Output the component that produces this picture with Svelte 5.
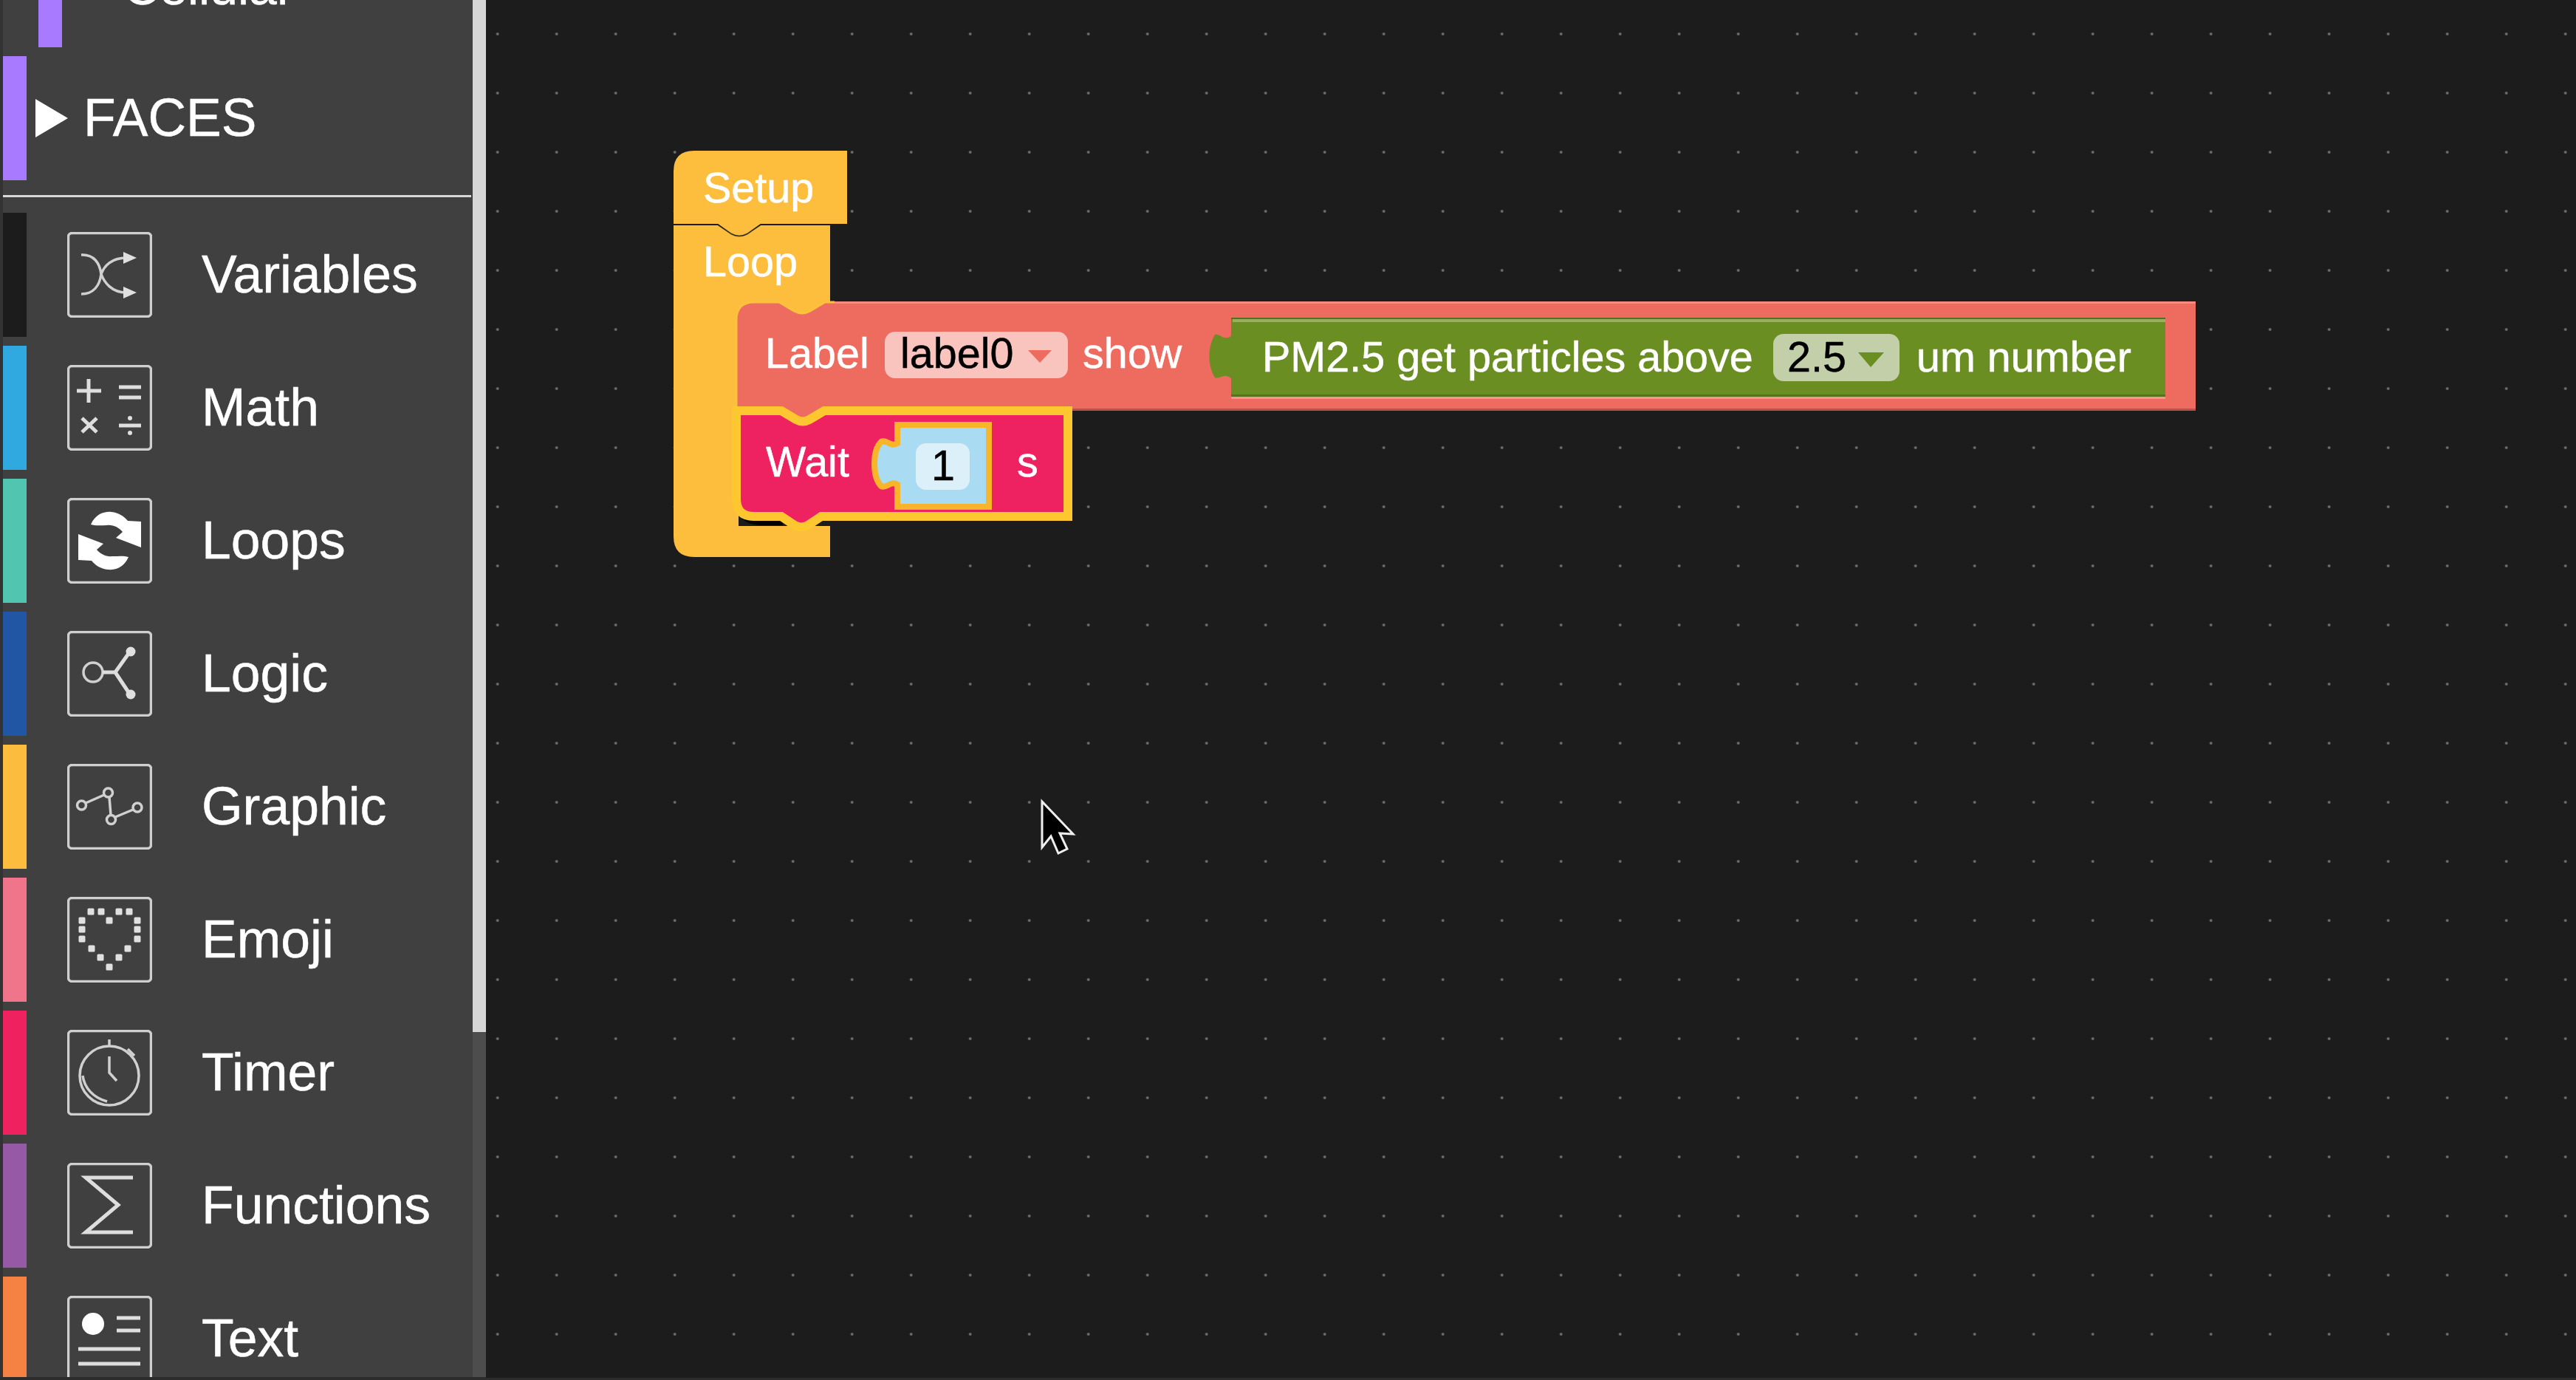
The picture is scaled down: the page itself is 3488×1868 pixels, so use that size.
<script>
  const rows = [
    { name: "Variables", color: "#1c1c1c", icon: "variables" },
    { name: "Math", color: "#2fa9e0", icon: "math" },
    { name: "Loops", color: "#52c5b0", icon: "loops" },
    { name: "Logic", color: "#2156a5", icon: "logic" },
    { name: "Graphic", color: "#fcbc3e", icon: "graphic" },
    { name: "Emoji", color: "#f0758a", icon: "emoji" },
    { name: "Timer", color: "#f0215f", icon: "timer" },
    { name: "Functions", color: "#9659a5", icon: "functions" },
    { name: "Text", color: "#f58243", icon: "text" }
  ];

  const heartDots = [
    [32, 20], [46, 20], [70, 20], [84, 20],
    [20, 32], [57, 32], [95, 32],
    [20, 44], [95, 44], [20, 57], [95, 57],
    [33, 70], [82, 70], [45, 82], [70, 82], [57, 95]
  ];
</script>

<div class="page">
  <aside class="sidebar">
    <div class="list">
      <div class="row sub">
        <span class="bar purple"></span>
        <span class="label sublabel">Cellular</span>
      </div>
      <div class="row category">
        <span class="bar purple"></span>
        <svg class="caret" viewBox="0 0 44 52"><path d="M0 0 L44 26 L0 52Z" fill="#fff" /></svg>
        <span class="label">FACES</span>
      </div>
      <div class="sep"></div>
      {#each rows as row}
        <div class="row">
          <span class="bar" style="background: {row.color}"></span>
          <svg class="icon" viewBox="0 0 115 116">
            <rect class="frame" x="1.5" y="1.5" width="112" height="113" rx="5" />
            {#if row.icon === "variables"}
              <path class="line" d="M19 31 C36 30 44 42 46 57 C44 72 36 84 19 84" />
              <path class="line" d="M80 35 C60 35 50 46 46 57 C50 68 60 82 80 82" />
              <path class="solid" d="M76 27 L94 35 L76 43Z M76 74 L94 82 L76 90Z" />
            {:else if row.icon === "math"}
              <path class="bold" d="M29 19 V51 M13 35 H46 M70 30 H100 M70 44 H100 M20 72 L40 91 M40 72 L20 91 M70 82 H100" />
              <circle class="solid" cx="85" cy="72" r="3" />
              <circle class="solid" cx="85" cy="92" r="3" />
            {:else if row.icon === "loops"}
              <g>
                <path class="white" d="M32 36 C38 22 50 18 60 19 C70 20 77 25 82 31 L100 32 L100 67 L66 54 L75 46 C70 40 62 36 54 37 C46 37 38 38 32 36Z" />
                <path class="white" transform="rotate(180 57.5 58)" d="M32 36 C38 22 50 18 60 19 C70 20 77 25 82 31 L100 32 L100 67 L66 54 L75 46 C70 40 62 36 54 37 C46 37 38 38 32 36Z" />
              </g>
            {:else if row.icon === "logic"}
              <circle class="line" cx="35" cy="56" r="13" />
              <path class="bold" d="M48 56 H65 L85 28 M65 56 L85 86" />
              <circle class="solid" cx="86" cy="28" r="6.5" />
              <circle class="solid" cx="86" cy="86" r="6.5" />
            {:else if row.icon === "graphic"}
              <path class="line" d="M25 53 L50 42 M57 45 L59 69 M65 72 L89 62" />
              <circle class="line" cx="19.5" cy="56" r="6" />
              <circle class="line" cx="55.5" cy="39" r="6" />
              <circle class="line" cx="59.5" cy="75.5" r="6" />
              <circle class="line" cx="95" cy="59" r="6" />
            {:else if row.icon === "emoji"}
              {#each heartDots as d}
                <rect class="solid" x={d[0] - 4.5} y={d[1] - 4.5} width="9" height="9" rx="1.5" />
              {/each}
            {:else if row.icon === "timer"}
              <circle class="line" cx="57" cy="62" r="40" />
              <path class="line" d="M57 13 V22 M82 26 L91 35 M57 36 V58 L67 69" />
              <path class="line" d="M21 62 C23 78 35 92 54 97" />
            {:else if row.icon === "functions"}
              <path class="bold" d="M89 20 H25 L69 57 L25 94 H89" />
            {:else if row.icon === "text"}
              <circle class="white" cx="35" cy="38" r="15" />
              <path class="bold" d="M67 30 H99 M67 47 H99 M15 72 H99 M15 92 H99" />
            {/if}
          </svg>
          <span class="label">{row.name}</span>
        </div>
      {/each}
    </div>
    <div class="track"><div class="thumb"></div></div>
  </aside>

  <main class="canvas">
    <!-- viewBox uses page coordinates, the blocks sit freely on the workspace -->
    <svg class="blocks" viewBox="658 0 2830 1868">
      <path fill="#fcbe3c" d="M912 305 H972 L990 317 Q1001 323 1012 317 L1030 305 H1124 V440 H1000 V712 H1124 V754 H940 Q912 754 912 726Z" />
      <path fill="#fcbe3c" d="M912 303 V232 Q912 204 940 204 H1147 V303 H1030 L1012 316 Q1001 322 990 316 L972 303Z" />
      <path fill="none" stroke="#1c1c1c" stroke-width="2" opacity="0.5" d="M912 304 H972 L990 316.5 Q1001 322.5 1012 316.5 L1030 304 H1124" />
      <text x="952" y="274" class="t">Setup</text>
      <text x="952" y="374" class="t">Loop</text>
      <path d="M996 688 Q1003 712 1036 711 H1060 V680 H996Z" fill="#000" />

      <path fill="#ee6b5f" d="M997 555 V433 Q997 409 1021 409 H1055 L1075 421 Q1086 427 1097 421 L1117 409 H2973 V555 H1116 L1096 567 Q1087 572 1078 567 L1058 555Z" />
      <path fill="none" stroke="#fdc23c" stroke-width="3" d="M997 555 V433 Q997 409 1021 409 H1055 L1075 421 Q1086 427 1097 421 L1117 409 H1130" />
      <rect x="1130" y="408" width="1843" height="3" fill="#f88a7e" />
      <rect x="1452" y="553" width="1521" height="3" fill="#b4554c" />
      <text x="1036" y="498" class="t">Label</text>
      <rect x="1198" y="449" width="248" height="63" rx="14" fill="#f8c4bd" />
      <text x="1219" y="498" class="t dark">label0</text>
      <path d="M1392 474 H1424 L1408 491Z" fill="#ee6b5f" />
      <text x="1466" y="498" class="t">show</text>

      <path fill="#6b8e23" d="M1667 430 H2932 V537 H1667 V512 C1657 504 1652 514 1645 511 C1635 495 1635 470 1645 453 C1652 451 1657 462 1667 455Z" />
      <rect x="1667" y="430" width="1265" height="2" fill="#54701b" />
      <rect x="1669" y="432" width="1263" height="4" fill="#9bb05f" />
      <rect x="1667" y="534" width="1265" height="3" fill="#56721c" />
      <rect x="1667" y="537" width="1265" height="3" fill="#f9968a" />
      <text x="1709" y="503" class="t">PM2.5 get particles above</text>
      <rect x="2401" y="452" width="171" height="64" rx="14" fill="#c3cfa8" />
      <text x="2420" y="503" class="t dark">2.5</text>
      <path d="M2516 477 H2551 L2533 497Z" fill="#6b8e23" />
      <text x="2595" y="503" class="t">um number</text>

      <path fill="#ee2261" stroke="#fdc82f" stroke-width="12" d="M997 556 H1058 L1078 568 Q1087 573 1096 568 L1116 556 H1446 V699 H1112 L1094 711 Q1085 716 1076 711 L1058 699 H1021 Q997 699 997 675Z" />
      <text x="1037" y="645" class="t">Wait</text>
      <path fill="#a9dcf2" stroke="#f8b52a" stroke-width="8" d="M1215 575 H1339 V686 H1215 V656 C1206 650 1200 662 1193 658 C1181 645 1181 610 1193 598 C1200 594 1206 606 1215 600Z" />
      <rect x="1240" y="600" width="73" height="63" rx="14" fill="#dcf0f9" />
      <text x="1261" y="650" class="t dark">1</text>
      <text x="1377" y="645" class="t">s</text>

      <path d="M1411 1085 V1147 L1423 1132 L1433 1155 L1445 1149 L1435 1128 L1453 1129Z" fill="#000" stroke="#eee" stroke-width="3" />
    </svg>
  </main>
</div>

<style>
  :global(body) {
    margin: 0;
    background: #1c1c1c;
  }

  .page {
    display: flex;
    width: 3488px;
    height: 1868px;
    overflow: hidden;
    font-family: "Liberation Sans", Arial, sans-serif;
    background: #2c2c2c;
    /* the reference is a soft video capture */
    filter: blur(0.7px);
  }

  .sidebar {
    display: flex;
    flex: none;
    width: 658px;
    height: 1864px;
    background: #404040;
    overflow: hidden;
  }

  .list {
    flex: 1;
    min-width: 0;
    padding-left: 4px;
    margin-top: -104px;
    box-shadow: inset 4px 0 0 #333;
  }

  .row {
    display: flex;
    align-items: center;
    height: 168px;
    margin-bottom: 12px;
    color: #fff;
  }

  .bar {
    flex: none;
    width: 32px;
    height: 100%;
    margin-right: 55px;
  }

  .purple {
    background: #a87aff;
  }

  .sub .bar {
    margin-left: 48px;
    margin-right: 83px;
  }

  .category {
    margin-bottom: 20px;
  }

  .category .bar {
    margin-right: 12px;
  }

  .caret {
    flex: none;
    width: 44px;
    height: 52px;
    margin-right: 21px;
  }

  .sep {
    height: 3px;
    margin: 0 2px 21px 0;
    background: #d8d8d8;
  }

  .icon {
    flex: none;
    width: 115px;
    height: 116px;
    margin-right: 67px;
  }

  .frame {
    fill: none;
    stroke: #cfcfcf;
    stroke-width: 3.5;
  }

  .line {
    fill: none;
    stroke: #d0d0d0;
    stroke-width: 3.5;
  }

  .bold {
    fill: none;
    stroke: #dedede;
    stroke-width: 5;
  }

  .solid {
    fill: #e0e0e0;
  }

  .white {
    fill: #fff;
  }

  .label {
    font-size: 71.5px;
    white-space: nowrap;
    padding-bottom: 2px;
    -webkit-text-stroke: 0.5px #fff;
  }

  .sublabel {
    font-size: 68px;
    padding-bottom: 0;
    margin-top: 3px;
  }

  .track {
    flex: none;
    width: 18px;
    background: #4d4d4d;
  }

  .thumb {
    height: 1397px;
    background: #d6d6d6;
  }

  .canvas {
    position: relative;
    flex: 1;
    height: 1865px;
    background-color: #1c1c1c;
    background-image: radial-gradient(circle at center, #6a6a6a 1.5px, transparent 2.2px);
    background-size: 80px 80px;
    background-position: -24.3px 6px;
  }

  .blocks {
    position: absolute;
    left: 0;
    top: 0;
    width: 2830px;
    height: 1868px;
  }

  .t {
    fill: #fff;
    stroke: #fff;
    stroke-width: 0.5px;
    font-size: 57.5px;
    font-family: "Liberation Sans", Arial, sans-serif;
  }

  .dark {
    fill: #000;
    stroke: #000;
  }
</style>
